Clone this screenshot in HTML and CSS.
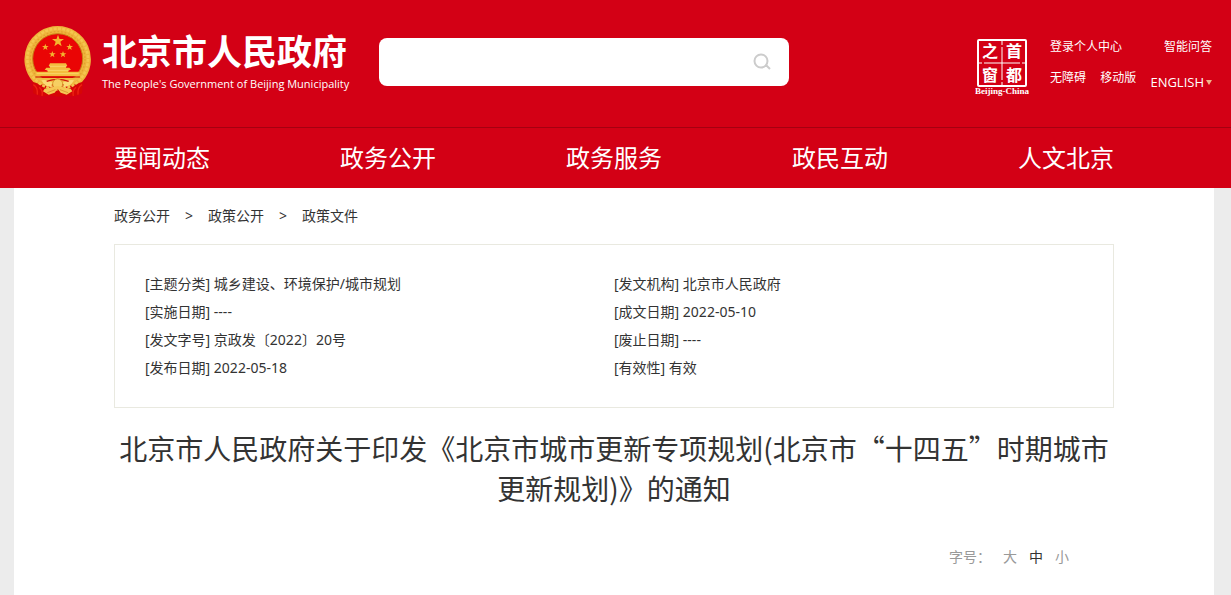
FILE: index.html
```html
<!DOCTYPE html>
<html lang="zh-CN">

<head>
    <meta charset="UTF-8">
    <meta name="viewport" content="width=device-width, initial-scale=1.0">
    <title>北京市人民政府</title>
    <link rel="stylesheet" href="styles.css">
</head>

<body>
    <header class="header">
        <a class="logo" href="#">
            <svg class="emblem" viewBox="0 0 201 213" aria-hidden="true">
                <!-- ribbon behind the wreath -->
                <path d="M24 150 L28 202 Q50 216 74 208 L102 212 L130 208 Q154 216 174 202 L178 150 Z" fill="#d60606"/>
                <path d="M28 176 q14 8 12 30 M46 184 q12 10 8 26 M174 176 q-14 8 -12 30 M156 184 q-12 10 -8 26" fill="none" stroke="#ee2214" stroke-width="4"/>
                <!-- wreath -->
                <path d="M101 0 A100 100 0 0 1 174 168 L150 176 L101 166 L52 176 L28 168 A100 100 0 0 1 101 0 Z" fill="#eeb43c"/>
                <circle cx="101" cy="99" r="91" fill="none" stroke="#f4c64f" stroke-width="8" stroke-dasharray="9 4"/>
                <circle cx="101" cy="99" r="82" fill="none" stroke="#e3a12e" stroke-width="4" stroke-dasharray="5 6"/>
                <circle cx="101" cy="98" r="75" fill="#ea0505" stroke="#c98216" stroke-width="3"/>
                <g fill="#f4b52f">
                    <path d="M102 26 L106.500 39 L120 39 L109 47.500 L113 61 L102 53 L91 61 L95 47.500 L84 39 L97.500 39 Z"/>
                    <path d="M64 53 l2.500 7 h7.500 l-6 4.500 l2.200 7.500 l-6.200 -4.500 l-6.200 4.500 l2.200 -7.500 l-6 -4.500 h7.500 Z"/>
                    <path d="M137 53 l2.500 7 h7.500 l-6 4.500 l2.200 7.500 l-6.200 -4.500 l-6.200 4.500 l2.200 -7.500 l-6 -4.500 h7.500 Z"/>
                    <path d="M85 75 l2.500 7 h7.500 l-6 4.500 l2.200 7.500 l-6.200 -4.500 l-6.200 4.500 l2.200 -7.500 l-6 -4.500 h7.500 Z"/>
                    <path d="M117 75 l2.500 7 h7.500 l-6 4.500 l2.200 7.500 l-6.200 -4.500 l-6.200 4.500 l2.200 -7.500 l-6 -4.500 h7.500 Z"/>
                </g>
                <!-- gate -->
                <path d="M78 112 H126 L130 120 H126 V125 H136 L141 132 H133 V137 H166 V151 H36 V137 H71 V132 H62 L67 125 H78 V120 H74 Z" fill="#f4bd3e"/>
                <path d="M76 121 H128 M68 133 H136 M38 143 H164" stroke="#fbe07c" stroke-width="2"/>
                <path d="M34 153 H168" stroke="#d01205" stroke-width="3"/>
                <!-- gear and knot -->
                <path d="M34 156 H168 L150 168 L138 181 L120 176 L102 166 L84 176 L66 181 L54 168 Z" fill="#f1bd45"/>
                <path d="M52 163 Q72 160 86 170 Q78 180 88 180 Q80 188 60 174 Z M150 163 Q130 160 116 170 Q124 180 114 180 Q122 188 142 174 Z" fill="#fbdc75"/>
                <path d="M68 166 Q101 154 134 166" fill="none" stroke="#cf1508" stroke-width="4"/>
                <circle cx="101" cy="174" r="15" fill="#f6cf62" stroke="#cf8a1c" stroke-width="2"/>
                <path d="M101 180 L62 188 L57 196 L74 206 L92 200 L101 188 L110 200 L128 206 L145 196 L140 188 Z" fill="#f5c654"/>
                <path d="M94 191 L70 200 M108 191 L132 200" stroke="#d08a20" stroke-width="2"/>
            </svg>
            <span class="logo-text">
                <span class="logo-cn">北京市人民政府</span>
                <span class="logo-en">The People's Government of Beijing Municipality</span>
            </span>
        </a>
        <form class="search">
            <input type="text" class="search-input" aria-label="搜索">
            <button type="button" class="search-btn" aria-label="搜索">
                <svg viewBox="0 0 18 18" width="18" height="18" fill="none" stroke="#ccc" stroke-width="2">
                    <circle cx="8" cy="8" r="6.500"/>
                    <path d="M12 13 H14 L17 16"/>
                </svg>
            </button>
        </form>
        <div class="tools">
            <a class="seal" href="#">
                <svg viewBox="0 0 54 58" width="54" height="58">
                    <rect x="3" y="1" width="48" height="46" rx="1" fill="none" stroke="#fff" stroke-width="2"/>
                    <path d="M27 2 V6 M27 8 V41 M27 43 V47 M4 24 H7 M9 24 H45 M47 24 H50" stroke="#fff"/>
                    <text class="seal-char" x="15" y="18">之</text>
                    <text class="seal-char" x="39" y="18">首</text>
                    <text class="seal-char" x="15" y="42">窗</text>
                    <text class="seal-char" x="39" y="42">都</text>
                    <text class="seal-name" x="27" y="55">Beijing-China</text>
                </svg>
            </a>
            <div class="links">
                <div class="links-row">
                    <a href="#">登录个人中心</a>
                    <a href="#">智能问答</a>
                </div>
                <div class="links-row">
                    <a href="#">无障碍</a>
                    <a href="#">移动版</a>
                    <button type="button" class="lang">ENGLISH<span class="lang-arrow"></span></button>
                </div>
            </div>
        </div>
    </header>

    <nav class="nav">
        <a href="#">要闻动态</a>
        <a href="#">政务公开</a>
        <a href="#">政务服务</a>
        <a href="#">政民互动</a>
        <a href="#">人文北京</a>
    </nav>

    <main class="page">
        <div class="crumbs">
            <a href="#">政务公开</a>
            <span>&gt;</span>
            <a href="#">政策公开</a>
            <span>&gt;</span>
            <a href="#">政策文件</a>
        </div>

        <ul class="info">
            <li>[主题分类] 城乡建设、环境保护/城市规划</li>
            <li>[发文机构] 北京市人民政府</li>
            <li>[实施日期] ----</li>
            <li>[成文日期] 2022-05-10</li>
            <li>[发文字号] 京政发〔2022〕20号</li>
            <li>[废止日期] ----</li>
            <li>[发布日期] 2022-05-18</li>
            <li>[有效性] 有效</li>
        </ul>

        <h1 class="title">北京市人民政府关于印发《北京市城市更新专项规划(北京市“十四五”时期城市更新规划)》的通知</h1>

        <div class="font-size">
            <span>字号：</span>
            <button type="button">大</button>
            <button type="button" class="active">中</button>
            <button type="button">小</button>
        </div>
    </main>
</body>

</html>
```
FILE: styles.css
```css
* {
    box-sizing: border-box;
}

body {
    margin: 0;
    background-color: #ececec;
    color: #333;
    font-family: "Noto Sans", "Noto Sans CJK SC", sans-serif;
    font-size: 14px;
    line-height: 28px;
}

a {
    color: inherit;
    text-decoration: none;
}

button {
    padding: 0;
    border: 0;
    background: none;
    color: inherit;
    font: inherit;
    cursor: pointer;
}

/* header */
.header {
    display: flex;
    align-items: flex-start;
    padding: 26px 19px 23px 24px;
    background-color: #d30015;
    color: #fff;
}

.logo {
    display: flex;
    gap: 11px;
    flex: none;
}

.emblem {
    width: 67px;
    height: 71px;
}

.logo-text {
    padding-top: 6px;
}

.logo-cn,
.logo-en {
    display: block;
    white-space: nowrap;
}

.logo-cn {
    font-size: 35px;
    font-weight: 700;
    line-height: 40px;
}

.logo-en {
    font-family: "Open Sans", sans-serif;
    font-size: 11px;
    line-height: 24px;
}

.search {
    display: flex;
    align-items: center;
    flex: 0 1 410px;
    height: 48px;
    margin: 12px 0 0 30px;
    padding-right: 18px;
    border-radius: 8px;
    background-color: #fff;
}

.search-input {
    flex: 1;
    min-width: 0;
    height: 48px;
    padding: 0 16px;
    border: 0;
    border-radius: 8px;
    background: none;
    font: inherit;
    outline: none;
}

.search-btn {
    display: flex;
}

.tools {
    display: flex;
    gap: 21px;
    margin: 12px 0 0 auto;
    font-size: 12px;
}

.seal {
    display: block;
    height: 58px;
    padding-top: 1px;
}

.seal-char {
    fill: #fff;
    font-family: "Noto Sans CJK SC", sans-serif;
    font-size: 16px;
    font-weight: 700;
    text-anchor: middle;
}

.seal-name {
    fill: #fff;
    font-family: "Liberation Serif", serif;
    font-size: 9px;
    font-weight: 700;
    text-anchor: middle;
}

.links {
    width: 162px;
    line-height: 18px;
}

.links-row {
    display: flex;
    justify-content: space-between;
    margin-bottom: 13px;
    white-space: nowrap;
}

.lang {
    display: flex;
    align-items: center;
    gap: 2px;
    padding-top: 4px;
    font-family: "Open Sans", sans-serif;
    font-size: 13px;
}

.lang-arrow {
    border: 3px solid transparent;
    border-top: 5px solid #efb58a;
    border-bottom: 0;
}

/* main menu */
.nav {
    display: flex;
    justify-content: space-between;
    padding: 0 117px 0 114px;
    border-top: 1px solid #a50010;
    background-color: #d30015;
    color: #fff;
    font-size: 24px;
    line-height: 60px;
}

/* article */
.page {
    min-height: calc(100vh - 188px);
    margin: 0 17px 0 14px;
    padding: 14px 100px 24px;
    background-color: #fff;
}

.crumbs {
    display: flex;
    gap: 15px;
}

.info {
    display: grid;
    grid-template-columns: 1fr 1fr;
    margin: 14px 0 20px;
    padding: 25px 30px;
    border: 1px solid #e9e9e0;
    list-style: none;
}

.title {
    margin: 0;
    font-family: "Noto Sans CJK SC", sans-serif;
    font-size: 28px;
    font-weight: 400;
    line-height: 40px;
    text-align: center;
}

.font-size {
    display: flex;
    justify-content: flex-end;
    gap: 12px;
    margin-top: 35px;
    padding-right: 45px;
    color: #999;
}

.font-size .active {
    color: #333;
}
```
